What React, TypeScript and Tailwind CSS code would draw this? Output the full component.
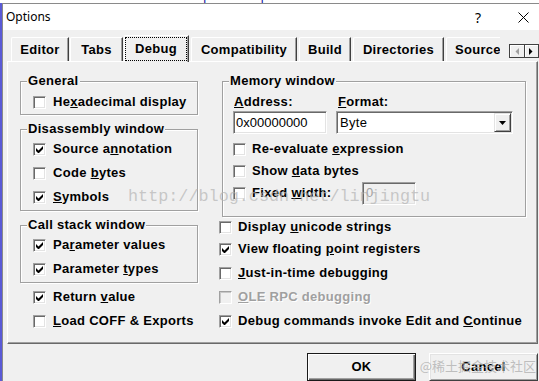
import type { ReactNode } from 'react';
import { twMerge } from 'tailwind-merge';

const TABS = [
  { label: 'Editor', cls: 'w-[58px]' },
  { label: 'Tabs', cls: 'ml-px w-[53px]' },
  { label: 'Debug', cls: 'ml-px w-[65px]', active: true },
  { label: 'Compatibility', cls: 'ml-[2px] w-[106px]' },
  { label: 'Build', cls: 'ml-[2px] w-[52px]' },
  { label: 'Directories', cls: 'ml-[2px] w-[91px]' },
];

const SUNKEN =
  'border border-t-[#a0a0a0] border-l-[#a0a0a0] border-r-white border-b-white shadow-[inset_1px_1px_0_#696969,inset_-1px_-1px_0_#e3e3e3]';

function Box({ checked, disabled }: { checked?: boolean; disabled?: boolean }) {
  return (
    <span
      className={twMerge(
        'flex h-[13px] w-[13px] shrink-0 items-center justify-center',
        SUNKEN,
        disabled ? 'bg-[#f0f0f0] shadow-[inset_1px_1px_0_#c8c8c8]' : 'bg-white'
      )}
    >
      {checked && (
        <svg width="7" height="7" viewBox="0 0 7 7">
          <path d="M0 2v3l2 2h1l4-4V0L2.5 4.5z" fill="#000" />
        </svg>
      )}
    </span>
  );
}

function Check({
  checked,
  disabled,
  className,
  children,
}: {
  checked?: boolean;
  disabled?: boolean;
  className?: string;
  children: ReactNode;
}) {
  return (
    <div className={twMerge('flex h-6 items-center gap-[7px]', className)}>
      <Box checked={checked} disabled={disabled} />
      <span className={disabled ? 'text-[#a0a0a0] [text-shadow:1px_1px_0_#fff]' : ''}>{children}</span>
    </div>
  );
}

function Group({ title, className, children }: { title: string; className?: string; children: ReactNode }) {
  return (
    <div
      className={twMerge(
        'relative border border-[#a0a0a0] shadow-[inset_1px_1px_0_#fff,1px_1px_0_#fff]',
        className
      )}
    >
      <span className="absolute -top-[9px] left-[6px] bg-[#f0f0f0] px-px leading-4">{title}</span>
      {children}
    </div>
  );
}

function Tab({ label, cls, active }: { label: string; cls: string; active?: boolean }) {
  if (active) {
    return (
      <div
        className={twMerge(
          'relative -mb-px flex h-[27px] flex-col rounded-tl-[2px] border-l border-t border-white bg-[#f0f0f0] pb-px pr-px pt-px',
          'border-r border-r-[#404040] shadow-[inset_-1px_0_0_#a0a0a0]',
          cls
        )}
      >
        <div className="flex flex-1 items-center justify-center border border-dotted border-black">{label}</div>
      </div>
    );
  }
  return (
    <div
      className={twMerge(
        'flex h-6 items-center justify-center rounded-tl-[2px] border-l border-t border-white border-r border-r-[#404040] shadow-[inset_-1px_0_0_#a0a0a0]',
        cls
      )}
    >
      {label}
    </div>
  );
}

export default function App() {
  return (
    <div className="relative h-[381px] w-[539px] overflow-hidden bg-[#f0f0f0] text-[13px] font-bold tracking-[0.3px] text-black [font-family:'Liberation_Sans',Arial,sans-serif]">
      {/* editor behind the dialog */}
      <div className="h-[3px] overflow-hidden bg-white">
        <div className="-mt-[11px] whitespace-pre text-[13px] font-normal leading-[14px] text-[#1a1aa6]">
          {'   DLL  30         0x40000          #Options Dependencies mean'}
        </div>
      </div>

      <div className="flex h-[378px]">
        <div className="w-[2px] bg-[#5a5ad6]" />
        <div className="flex flex-1 flex-col border-l border-t border-[#8a8a8a]">
          {/* title bar */}
          <div className="flex h-[26px] items-center bg-white pl-[3px] font-normal tracking-normal [font-family:'Noto_Sans',sans-serif]">
            <span className="text-[12px]">Options</span>
            <span className="flex-1" />
            <span className="w-5 text-center text-[14px]">?</span>
            <span className="ml-[25px] flex w-5 justify-center">
              <svg width="11" height="11" viewBox="0 0 11 11">
                <path d="M0.5 0.5l10 10M10.5 0.5l-10 10" stroke="#000" strokeWidth="1" />
              </svg>
            </span>
            <span className="w-[6px]" />
          </div>

          {/* tabs */}
          <div className="relative z-10 flex h-[31px] items-end pl-[8px]">
            {TABS.map((t) => (
              <Tab key={t.label} {...t} />
            ))}
            <div className="ml-[2px] flex h-6 w-[54px] items-center overflow-hidden rounded-tl-[2px] border-l border-t border-white pl-[8px]">
              <span className="whitespace-nowrap">Source</span>
            </div>
            <div className="mb-[3px] ml-[9px] flex h-[14px] w-[30px] border border-[#404040] bg-[#f0f0f0]">
              <div className="flex flex-1 items-center justify-center shadow-[inset_1px_1px_0_#fff]">
                <svg width="4" height="7" viewBox="0 0 4 7">
                  <path d="M4 0v7L0.5 3.5z" fill="#a0a0a0" />
                </svg>
              </div>
              <div className="flex flex-1 items-center justify-center border-l border-[#404040] shadow-[inset_1px_1px_0_#fff]">
                <svg width="4" height="7" viewBox="0 0 4 7">
                  <path d="M0 0v7l3.5-3.5z" fill="#000" />
                </svg>
              </div>
            </div>
          </div>

          {/* tab page */}
          <div className="ml-[4px] flex h-[283px] w-[531px] gap-[24px] border-b border-l border-r border-t border-b-[#696969] border-l-white border-r-[#696969] border-t-white pl-3 pt-[19px] shadow-[inset_-1px_-1px_0_#a0a0a0]">
            <div className="flex w-[178px] flex-col">
              <Group title="General" className="pl-3 pt-2">
                <Check>
                  He<u>x</u>adecimal display
                </Check>
              </Group>
              <Group title="Disassembly window" className="mt-[14px] pb-px pl-3 pt-[7px]">
                <Check checked>
                  Source a<u>n</u>notation
                </Check>
                <Check>
                  Code <u>b</u>ytes
                </Check>
                <Check checked>
                  <u>S</u>ymbols
                </Check>
              </Group>
              <Group title="Call stack window" className="mt-[14px] pb-px pl-3 pt-[7px]">
                <Check checked>
                  Pa<u>r</u>ameter values
                </Check>
                <Check checked>
                  Parameter <u>t</u>ypes
                </Check>
              </Group>
              <div className="mt-[2px] pl-[13px]">
                <Check checked>
                  Return <u>v</u>alue
                </Check>
                <Check>
                  <u>L</u>oad COFF &amp; Exports
                </Check>
              </div>
            </div>

            <div className="flex w-[304px] flex-col">
              <Group title="Memory window" className="pb-3 pl-[10px] pr-3 pt-3">
                <div className="flex gap-[9px]">
                  <div className="w-[94px]">
                    <div className="h-4 pl-px leading-4">
                      <u>A</u>ddress:
                    </div>
                    <div className={twMerge('mt-px flex h-[23px] items-center bg-white pl-[2px] font-normal tracking-normal', SUNKEN)}>
                      0x00000000
                    </div>
                  </div>
                  <div className="flex-1">
                    <div className="h-4 pl-[2px] leading-4">
                      <u>F</u>ormat:
                    </div>
                    <div className={twMerge('mt-px flex h-[23px] items-center bg-white pl-[3px] pr-px font-normal', SUNKEN)}>
                      <span className="flex-1">Byte</span>
                      <span className="flex h-[19px] w-[17px] items-center justify-center border border-b-[#404040] border-l-[#e3e3e3] border-r-[#404040] border-t-[#e3e3e3] bg-[#f0f0f0] shadow-[inset_1px_1px_0_#fff,inset_-1px_-1px_0_#a0a0a0]">
                        <svg width="7" height="4" viewBox="0 0 7 4">
                          <path d="M0 0h7L3.5 4z" fill="#000" />
                        </svg>
                      </span>
                    </div>
                  </div>
                </div>
                <Check className="mt-[4px] h-[22px] gap-[6px]">
                  Re-evaluate <u>e</u>xpression
                </Check>
                <Check className="h-[22px] gap-[6px]">
                  Show <u>d</u>ata bytes
                </Check>
                <div className="flex h-[22px] items-center">
                  <Box />
                  <span className="ml-[6px] w-[110px]">
                    Fixed <u>w</u>idth:
                  </span>
                  <div className={twMerge('flex h-[23px] w-[54px] items-center bg-[#f0f0f0] pl-[3px] font-normal text-[#a0a0a0]', SUNKEN)}>
                    0
                  </div>
                </div>
              </Group>
              <div className="-ml-[3px] flex flex-col">
                <Check className="h-5 gap-[6px]">
                  Display <u>u</u>nicode strings
                </Check>
                <Check checked className="gap-[6px]">
                  View floating <u>p</u>oint registers
                </Check>
                <Check className="gap-[6px]">
                  <u>J</u>ust-in-time debugging
                </Check>
                <Check disabled className="gap-[6px]">
                  <u>O</u>LE RPC debugging
                </Check>
                <Check checked className="gap-[6px]">
                  Debug commands invoke Edit and <u>C</u>ontinue
                </Check>
              </div>
            </div>
          </div>

          {/* buttons */}
          <div className="mt-[9px] flex gap-[13px] pl-[304px]">
            <button className="flex h-[28px] w-[109px] items-center justify-center border border-[#1a1a1a] bg-[#f0f0f0] font-bold shadow-[inset_1px_1px_0_#fff,inset_-1px_-1px_0_#696969,inset_-2px_-2px_0_#a0a0a0]">
              OK
            </button>
            <button className="flex h-[28px] w-[109px] items-center justify-center border border-b-[#404040] border-l-white border-r-[#404040] border-t-white bg-[#f0f0f0] font-bold shadow-[inset_1px_1px_0_#e3e3e3,inset_-1px_-1px_0_#a0a0a0]">
              Cancel
            </button>
          </div>
        </div>
      </div>

      {/* watermarks */}
      <div className="pointer-events-none absolute left-[128px] top-[186px] whitespace-nowrap text-[16.8px] font-normal leading-[22px] tracking-normal text-[#b4b4b4]/70 [font-family:'Liberation_Mono',monospace]">
        http://blog.csdn.net/linjingtu
      </div>
      <div className="pointer-events-none absolute right-[3px] top-[356px] whitespace-nowrap text-[13px] font-normal leading-5 tracking-normal text-[#b0b0b0]/80 [font-family:'Noto_Sans_CJK_SC',sans-serif]">
        @稀土掘金技术社区
      </div>
    </div>
  );
}
